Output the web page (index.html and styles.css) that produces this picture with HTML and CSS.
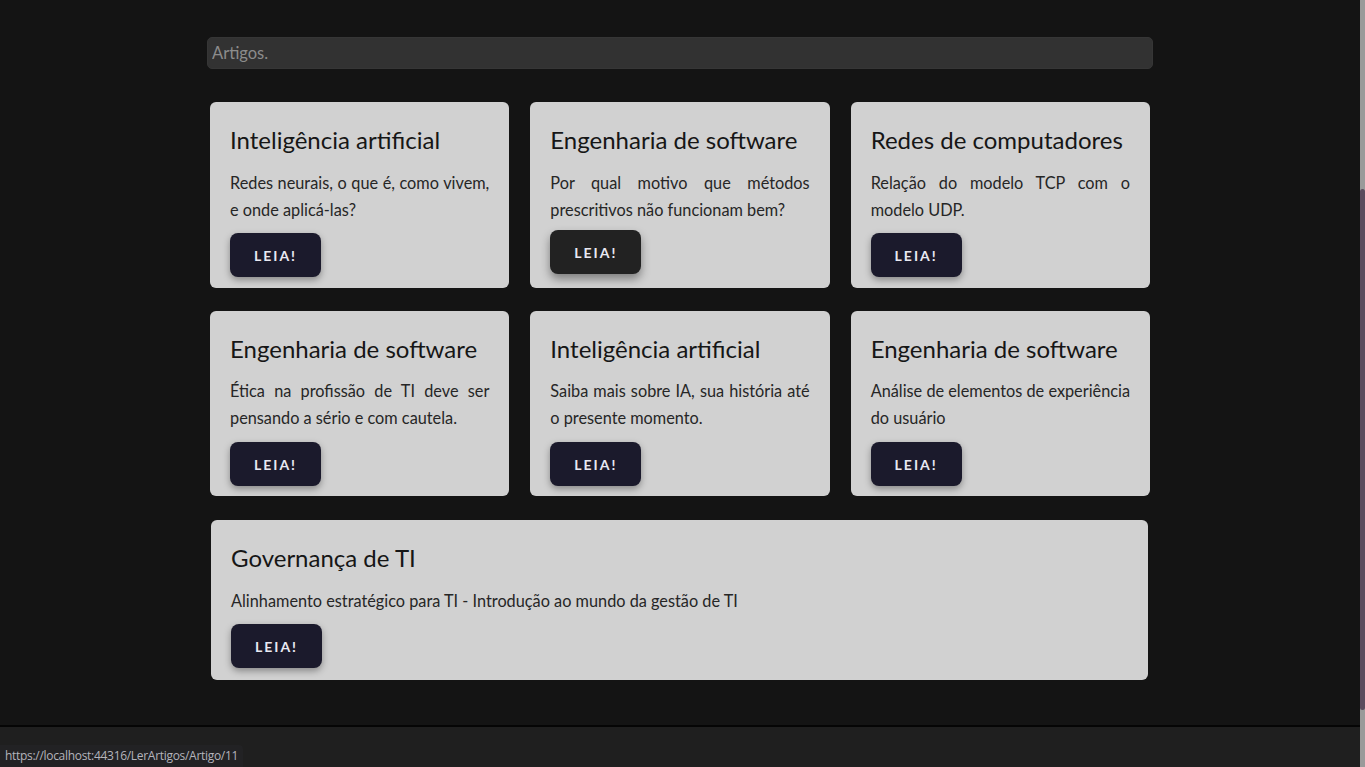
FILE: index.html
```html
<!DOCTYPE html>
<html lang="pt-BR">
<head>
<meta charset="utf-8">
<title>Artigos</title>
<link rel="stylesheet" href="styles.css">
</head>
<body>
<div class="viewport">
  <div class="page">
    <main class="main">
      <div class="container">
        <input class="search" type="text" placeholder="Artigos.">
        <div class="grid">
          <div class="card">
            <h5 class="card-title">Inteligência artificial</h5>
            <p class="card-text">Redes neurais, o que é, como vivem, e onde aplicá-las?</p>
            <a class="btn">LEIA!</a>
          </div>
          <div class="card">
            <h5 class="card-title">Engenharia de software</h5>
            <p class="card-text">Por qual motivo que métodos prescritivos não funcionam bem?</p>
            <a class="btn btn-hover">LEIA!</a>
          </div>
          <div class="card">
            <h5 class="card-title">Redes de computadores</h5>
            <p class="card-text">Relação do modelo TCP com o modelo UDP.</p>
            <a class="btn">LEIA!</a>
          </div>
          <div class="card card-r2">
            <h5 class="card-title">Engenharia de software</h5>
            <p class="card-text">Ética na profissão de TI deve ser pensando a sério e com cautela.</p>
            <a class="btn">LEIA!</a>
          </div>
          <div class="card card-r2">
            <h5 class="card-title">Inteligência artificial</h5>
            <p class="card-text">Saiba mais sobre IA, sua história até o presente momento.</p>
            <a class="btn">LEIA!</a>
          </div>
          <div class="card card-r2">
            <h5 class="card-title">Engenharia de software</h5>
            <p class="card-text">Análise de elementos de experiência do usuário</p>
            <a class="btn">LEIA!</a>
          </div>
          <div class="card card-wide">
            <h5 class="card-title">Governança de TI</h5>
            <p class="card-text">Alinhamento estratégico para TI - Introdução ao mundo da gestão de TI</p>
            <a class="btn">LEIA!</a>
          </div>
        </div>
      </div>
    </main>
    <footer class="footer">
      <div class="status">https://localhost:44316/LerArtigos/Artigo/11</div>
    </footer>
  </div>
  <div class="scrollbar"><div class="thumb"></div></div>
</div>
</body>
</html>
```
FILE: styles.css
```css
* { box-sizing: border-box; }
html, body { margin: 0; padding: 0; height: 100%; overflow: hidden; }
body {
  background: #141414;
  font-family: Lato, "Liberation Sans", sans-serif;
}
.viewport { display: flex; height: 767px; }
.page { flex: 1; display: flex; flex-direction: column; }
.main { flex: 1; padding-top: 37px; }
.container { width: 946px; margin: 0 auto; }
.search {
  display: block;
  width: 100%;
  height: 32px;
  background: #323232;
  border: 1px solid #363636;
  border-radius: 5px;
  padding: 0 4px;
  font-family: Lato, sans-serif;
  font-size: 16.5px;
  color: #ddd;
  outline: none;
}
.search::placeholder { color: #8c8c8c; }
.grid {
  display: grid;
  grid-template-columns: repeat(3, 1fr);
  column-gap: 21px;
  row-gap: 23px;
  padding: 0 3px;
  margin-top: 33px;
}
.card {
  background: #d1d1d1;
  border-radius: 6px;
  padding: 23px 20px 11px;
  height: 186px;
  color: #222;
}
.card-r2 { height: 185px; }
.card-wide { grid-column: 1 / span 3; margin: 1px 2px 0 1px; height: 160px; padding-top: 23px; }
.card-title {
  margin: 0 0 14px;
  font-size: 24px;
  font-weight: 400;
  line-height: 30px;
  color: #161616;
}
.card-text {
  margin: 0 0 10px;
  font-size: 16.3px;
  line-height: 27px;
  text-align: justify;
  color: #262626;
}
.card-r2 .card-text { margin-top: -1px; margin-bottom: 11px; }
.btn {
  display: inline-flex;
  align-items: center;
  justify-content: center;
  width: 91px;
  height: 44px;
  background: #1b1a2c;
  border-radius: 8px;
  color: #e9e9f2;
  font-weight: 700;
  font-size: 14px;
  letter-spacing: 2px;
  box-shadow: 0 3px 7px rgba(0,0,0,0.35);
}
.btn-hover {
  background: #222222;
  transform: translateY(-3px);
  box-shadow: 0 5px 10px rgba(0,0,0,0.4);
}
.footer {
  height: 42px;
  border-top: 2px solid #050505;
  background: #1f1f1f;
  display: flex;
  align-items: flex-end;
}
.status {
  height: 22px;
  padding: 0 5px;
  background: #222224;
  border-top-right-radius: 4px;
  color: #b4b4bc;
  font-family: "Open Sans", sans-serif;
  font-size: 12px;
  line-height: 22px;
  letter-spacing: -0.3px;
}
.scrollbar {
  width: 5px;
  background: #9a9a9a;
  padding-top: 189px;
}
.thumb {
  height: 521px;
  background: #5b4b5d;
  border-radius: 3px;
}
```
